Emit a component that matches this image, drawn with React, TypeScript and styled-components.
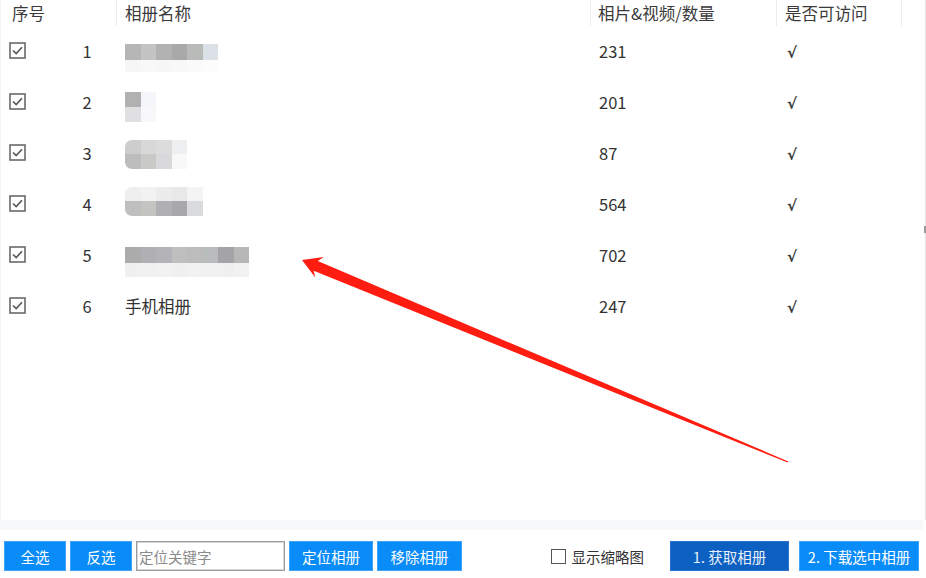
import React from "react";
import styled, { createGlobalStyle } from "styled-components";

const Global = createGlobalStyle`
  html, body { margin: 0; padding: 0; background: #fff; }
  body { font-family: "Noto Sans CJK SC", "Noto Sans", sans-serif; }
  * { box-sizing: border-box; }
`;

const Root = styled.div`
  position: relative;
  width: 926px;
  height: 578px;
  background: #fff;
  overflow: hidden;
  display: flex;
  flex-direction: column;
`;

const Panel = styled.div`
  height: 520px;
  border-left: 1px solid #f3f3f3;
  border-right: 1px solid #e4e4e4;
  display: flex;
  flex-direction: column;
`;

const Grid = styled.div`
  display: grid;
  grid-template-columns: 116px 474px 186px 125px 1fr;
`;

const HeaderCell = styled.div<{ $pl: number; $last?: boolean }>`
  height: 26px;
  display: flex;
  align-items: center;
  padding-left: ${(p) => p.$pl}px;
  padding-bottom: 1px;
  font-size: 16.5px;
  color: #3a3a3a;
  border-right: ${(p) => (p.$last ? "none" : "1px solid #ececec")};
  white-space: nowrap;
`;

const Cell = styled.div<{ $pl: number }>`
  height: 51px;
  display: flex;
  align-items: center;
  padding-left: ${(p) => p.$pl}px;
  padding-bottom: 2px;
  font-size: 16.5px;
  color: #333;
  white-space: nowrap;
`;

const NameCell = styled(Cell)`
  align-items: flex-start;
  padding-bottom: 0;
`;

const Num = styled.span`
  width: 40px;
  margin-left: 41px;
  text-align: center;
`;

const Tick = styled.span`
  font-family: "DejaVu Sans", sans-serif;
  font-size: 15px;
  font-weight: bold;
  color: #3a3a3a;
  margin-top: 5px;
`;

const Mosaic = styled.div<{ $top: number; $round?: boolean }>`
  margin-top: ${(p) => p.$top}px;
  display: flex;
  flex-direction: column;
  border-radius: ${(p) => (p.$round ? "7px 0 0 7px" : "0")};
  overflow: hidden;
`;

const MosaicRow = styled.div`
  display: flex;
`;

const Block = styled.div<{ $h: number }>`
  width: 15.5px;
  height: ${(p) => p.$h}px;
`;

const PlainName = styled.span`
  align-self: center;
  margin-bottom: 2px;
`;

const Band = styled.div`
  height: 10px;
  background: #f7f8fa;
  margin-right: 3px;
`;

const Toolbar = styled.div`
  flex: 1;
  display: flex;
  align-items: flex-start;
  padding: 11px 7px 0 4px;
`;

const Group = styled.div<{ $gap: number }>`
  display: flex;
  align-items: center;
  gap: ${(p) => p.$gap}px;
`;

const Spacer = styled.div`
  flex: 1;
`;

const Btn = styled.button<{ $w: number; $dark?: boolean }>`
  width: ${(p) => p.$w}px;
  height: 30px;
  border: 1px solid ${(p) => (p.$dark ? "#2a74cc" : "#3fa2fb")};
  background: ${(p) => (p.$dark ? "#0c60c2" : "#0a8cf8")};
  color: ${(p) => (p.$dark ? "#e8f0fb" : "#fff")};
  font-family: "Noto Sans CJK SC", sans-serif;
  font-size: 14.5px;
  padding: 0;
  display: flex;
  align-items: center;
  justify-content: center;
  white-space: nowrap;
`;

const Input = styled.input`
  width: 149px;
  height: 30px;
  border: 1px solid #9c9c9c;
  box-shadow: inset 0 0 0 1px #d6d6d6;
  font-family: "Noto Sans CJK SC", sans-serif;
  font-size: 14.5px;
  padding: 0 0 0 2px;
  color: #333;
  outline: none;
  &::placeholder { color: #8a8a8a; }
`;

const ThumbLabel = styled.label`
  display: flex;
  align-items: center;
  gap: 6px;
  font-size: 14.5px;
  color: #333;
  margin-right: 16px;
  height: 30px;
`;

const EmptyBox = styled.span`
  width: 15px;
  height: 15px;
  border: 1.5px solid #555;
  background: #fff;
  display: inline-block;
`;

const ArrowLayer = styled.svg`
  position: absolute;
  left: 0;
  top: 0;
  pointer-events: none;
`;

const ResizeMark = styled.div`
  position: absolute;
  left: 924px;
  top: 226px;
  width: 2px;
  height: 7px;
  background: #9a9a9a;
`;

const CheckIcon = () => (
  <svg width="17" height="17" viewBox="0 0 17 17">
    <rect x="1" y="1" width="15" height="15" fill="#fff" stroke="#6a6a6a" strokeWidth="1.6" />
    <polyline points="4,8.5 7.2,11.6 13,5.2" fill="none" stroke="#5a5a5a" strokeWidth="1.7" />
  </svg>
);

type M = { top: number; round?: boolean; rows: { h: number; c: string[] }[] };

const rows: { n: number; name?: string; mosaic?: M; count: number }[] = [
  {
    n: 1,
    count: 231,
    mosaic: {
      top: 18,
      rows: [
        { h: 16, c: ["#b6b6b6", "#c4c4c4", "#b2b2b2", "#a9a9a9", "#b9bbb9", "#dce1e7"] },
        { h: 12, c: ["#f6f6f6", "#f8f8f8", "#f7f7f7", "#f8f8f8", "#fafafa", "#fcfcfc"] },
      ],
    },
  },
  {
    n: 2,
    count: 201,
    mosaic: {
      top: 15,
      rows: [
        { h: 15, c: ["#b2b1b2", "#f4f6fa"] },
        { h: 15, c: ["#e0dfe1", "#f8f8fa"] },
      ],
    },
  },
  {
    n: 3,
    count: 87,
    mosaic: {
      top: 12,
      round: true,
      rows: [
        { h: 14, c: ["#cdcdcd", "#d8d8d8", "#dcdcdc", "#eeeff0"] },
        { h: 15, c: ["#bdbdbd", "#c9c9c7", "#d9d9db", "#f8f8f8"] },
      ],
    },
  },
  {
    n: 4,
    count: 564,
    mosaic: {
      top: 8,
      round: true,
      rows: [
        { h: 14, c: ["#efefef", "#f2f2f2", "#ececec", "#e8e8e8", "#f4f4f4"] },
        { h: 15, c: ["#bfbfbf", "#c4c4c0", "#b0b0b4", "#a8a8ac", "#dadbdd"] },
      ],
    },
  },
  {
    n: 5,
    count: 702,
    mosaic: {
      top: 17,
      rows: [
        { h: 16, c: ["#ababab", "#b0b0b4", "#b4b4b8", "#c0bfbf", "#bcbcbc", "#b8bcbc", "#a4a4a8", "#b8b7b8"] },
        { h: 14, c: ["#f0f0f0", "#f1f1f1", "#f2f2f2", "#f0f0f0", "#f2f2f2", "#f1f1f1", "#f0f0f0", "#f2f2f2"] },
      ],
    },
  },
  { n: 6, count: 247, name: "手机相册" },
];

function arrowPoints(): string {
  const tip = { x: 302, y: 260 };
  const tail = { x: 788, y: 462 };
  const dx = tail.x - tip.x;
  const dy = tail.y - tip.y;
  const len = Math.hypot(dx, dy);
  const u = { x: dx / len, y: dy / len };
  const n = { x: -u.y, y: u.x };
  const p = (a: number, b: number) =>
    `${(tip.x + u.x * a + n.x * b).toFixed(1)},${(tip.y + u.y * a + n.y * b).toFixed(1)}`;
  return [
    p(0, 0),
    p(19, -11),
    p(15, -5),
    p(len, -0.7),
    p(len, 0.7),
    p(15, 5.5),
    p(19, 11),
  ].join(" ");
}

const MosaicView = ({ m }: { m: M }) => (
  <Mosaic $top={m.top} $round={m.round}>
    {m.rows.map((r, i) => (
      <MosaicRow key={i}>
        {r.c.map((c, j) => (
          <Block key={j} $h={r.h} style={{ background: c }} />
        ))}
      </MosaicRow>
    ))}
  </Mosaic>
);

export default function App() {
  return (
    <Root>
      <Global />
      <Panel>
        <Grid>
          <HeaderCell $pl={11}>序号</HeaderCell>
          <HeaderCell $pl={8}>相册名称</HeaderCell>
          <HeaderCell $pl={7}>相片&amp;视频/数量</HeaderCell>
          <HeaderCell $pl={8}>是否可访问</HeaderCell>
          <HeaderCell $pl={0} $last />
          {rows.map((r) => (
            <React.Fragment key={r.n}>
              <Cell $pl={8}>
                <CheckIcon />
                <Num>{r.n}</Num>
              </Cell>
              <NameCell $pl={8}>
                {r.mosaic ? <MosaicView m={r.mosaic} /> : <PlainName>{r.name}</PlainName>}
              </NameCell>
              <Cell $pl={8}>{r.count}</Cell>
              <Cell $pl={10}>
                <Tick>√</Tick>
              </Cell>
              <Cell $pl={0} />
            </React.Fragment>
          ))}
        </Grid>
      </Panel>
      <Band />
      <Toolbar>
        <Group $gap={4}>
          <Btn $w={62}>全选</Btn>
          <Btn $w={62}>反选</Btn>
          <Input placeholder="定位关键字" />
          <Btn $w={84}>定位相册</Btn>
          <Btn $w={85}>移除相册</Btn>
        </Group>
        <Spacer />
        <Group $gap={10}>
          <ThumbLabel>
            <EmptyBox />
            显示缩略图
          </ThumbLabel>
          <Btn $w={119} $dark>
            1. 获取相册
          </Btn>
          <Btn $w={120}>2. 下载选中相册</Btn>
        </Group>
      </Toolbar>
      <ResizeMark />
      <ArrowLayer width="926" height="578" viewBox="0 0 926 578">
        <polygon points={arrowPoints()} fill="#ff1c10" />
      </ArrowLayer>
    </Root>
  );
}
